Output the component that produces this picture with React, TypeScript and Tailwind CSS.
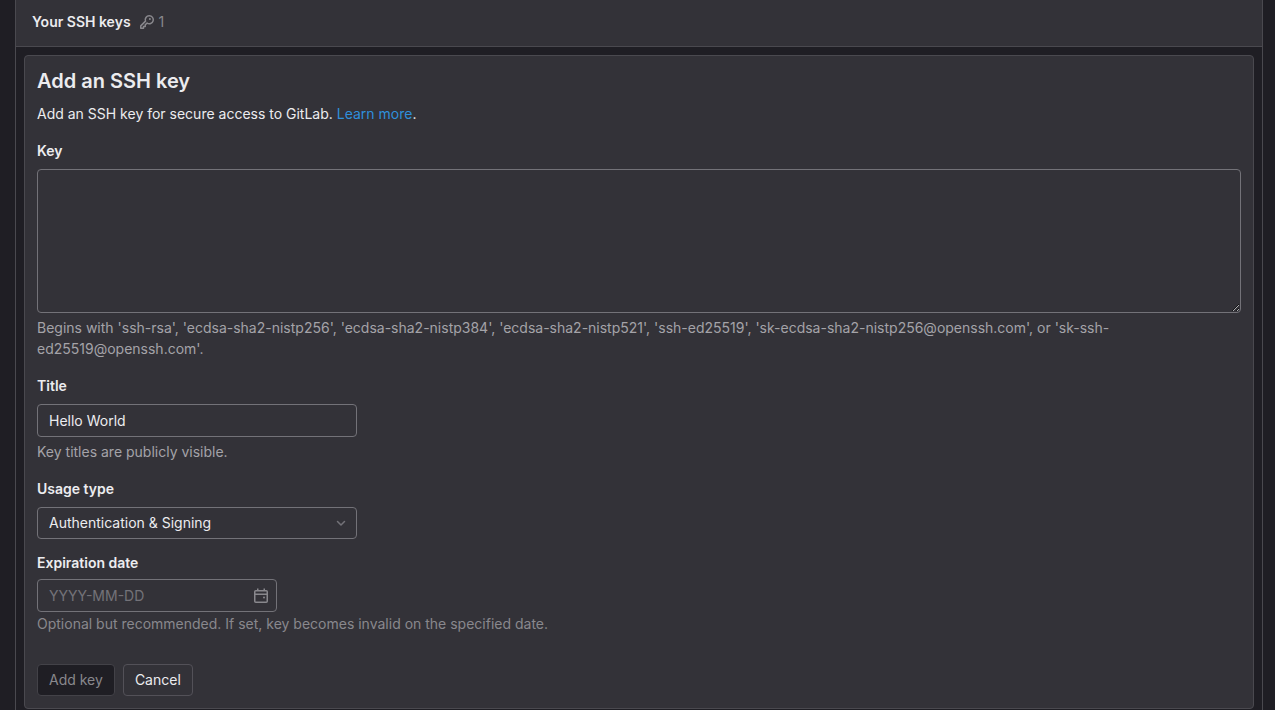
import React, { useState } from 'react';

const USAGE_TYPES = [
    { value: 'auth_and_signing', label: 'Authentication & Signing' },
    { value: 'auth', label: 'Authentication' },
    { value: 'signing', label: 'Signing' }
];

function KeyIcon() {
    return (
        <svg viewBox="0 0 16 16" className="w-4 h-4 shrink-0" fill="none" stroke="currentColor" strokeWidth="1.5" strokeLinejoin="round" aria-hidden="true">
            <path d="M10.3 1.75a4 4 0 0 0-3.8 5.4L1.75 11.9v2.35H4.5V12.5h1.75v-1.75L8.1 9.1a4 4 0 1 0 2.2-7.35Z" />
            <circle cx="10.9" cy="5.1" r="1" fill="currentColor" stroke="none" />
        </svg>
    );
}

function CalendarIcon() {
    return (
        <svg viewBox="0 0 16 16" className="w-4 h-4" fill="none" stroke="currentColor" strokeWidth="1.5" aria-hidden="true">
            <rect x="1.75" y="2.75" width="12.5" height="11.5" rx="1" />
            <path d="M1.75 6.25h12.5M4.75 0.5v2.5M11.25 0.5v2.5" />
            <circle cx="11" cy="9.5" r="1" fill="currentColor" stroke="none" />
        </svg>
    );
}

function ChevronIcon() {
    return (
        <svg viewBox="0 0 12 12" className="w-3 h-3" fill="none" stroke="currentColor" strokeWidth="1.5" strokeLinecap="round" strokeLinejoin="round" aria-hidden="true">
            <path d="M2.5 4.5 6 8l3.5-3.5" />
        </svg>
    );
}

interface FieldLabelProps {
    htmlFor: string;
    children: React.ReactNode;
}

function FieldLabel({ htmlFor, children }: FieldLabelProps) {
    return (
        <label htmlFor={htmlFor} className="block font-semibold leading-5">
            {children}
        </label>
    );
}

export default function App() {
    const [key, setKey] = useState('');
    const [title, setTitle] = useState('Hello World');
    const [usageType, setUsageType] = useState('auth_and_signing');
    const [expiresAt, setExpiresAt] = useState('');

    return (
        <div className="min-h-screen bg-[#1f1e24] pl-[15px] pr-3 font-['Inter',sans-serif] text-sm text-[#ececef]">
            <section className="min-h-screen border-x border-[#4a494f]">
                <header className="flex items-center gap-2 bg-[#333238] border-b border-[#4a494f] px-4 pt-3 pb-[14px]">
                    <h2 className="font-semibold leading-5">Your SSH keys</h2>
                    <span className="flex items-center gap-1 text-[#89888d] leading-5">
                        <KeyIcon />
                        1
                    </span>
                </header>

                <div className="p-2 pb-0">
                    <form
                        className="bg-[#333238] border border-[#4a494f] rounded p-3"
                        onSubmit={(e) => e.preventDefault()}
                    >
                        <h3 className="text-xl font-semibold leading-[26px]">Add an SSH key</h3>
                        <p className="mt-[10px] leading-5">
                            Add an SSH key for secure access to GitLab. <a href="#" className="text-[#2f8fdc]">Learn more</a>.
                        </p>

                        <div className="mt-[17px]">
                            <FieldLabel htmlFor="key">Key</FieldLabel>
                            <textarea
                                id="key"
                                className="block mt-2 w-full h-36 px-3 py-2 border border-[#737278] rounded bg-transparent scheme-dark resize-y"
                                value={key}
                                onChange={(e) => setKey(e.target.value)}
                            />
                            <p className="mt-1 leading-[21px] text-[#a4a3a8]">
                                Begins with 'ssh-rsa', 'ecdsa-sha2-nistp256', 'ecdsa-sha2-nistp384', 'ecdsa-sha2-nistp521', 'ssh-ed25519', 'sk-ecdsa-sha2-nistp256@openssh.com', or 'sk-ssh-ed25519@openssh.com'.
                            </p>
                        </div>

                        <div className="mt-[17px]">
                            <FieldLabel htmlFor="title">Title</FieldLabel>
                            <input
                                id="title"
                                type="text"
                                className="block mt-2 w-80 h-[33px] px-[11px] border border-[#737278] rounded bg-transparent"
                                value={title}
                                onChange={(e) => setTitle(e.target.value)}
                            />
                            <p className="mt-1 leading-[21px] text-[#a4a3a8]">Key titles are publicly visible.</p>
                        </div>

                        <div className="mt-[17px]">
                            <FieldLabel htmlFor="usage-type">Usage type</FieldLabel>
                            <div className="relative mt-2 w-80">
                                <select
                                    id="usage-type"
                                    className="block w-full h-8 pl-[11px] pr-8 border border-[#737278] rounded bg-[#333238] appearance-none"
                                    value={usageType}
                                    onChange={(e) => setUsageType(e.target.value)}
                                >
                                    {USAGE_TYPES.map((type) => (
                                        <option key={type.value} value={type.value}>{type.label}</option>
                                    ))}
                                </select>
                                <span className="absolute inset-y-0 right-[10px] flex items-center pointer-events-none text-[#737278]">
                                    <ChevronIcon />
                                </span>
                            </div>
                        </div>

                        <div className="mt-[14px]">
                            <FieldLabel htmlFor="expires-at">Expiration date</FieldLabel>
                            <div className="relative mt-[6px] w-60">
                                <input
                                    id="expires-at"
                                    type="text"
                                    className="block w-full h-[33px] pl-[11px] pr-8 border border-[#737278] rounded bg-transparent placeholder:text-[#737278]"
                                    placeholder="YYYY-MM-DD"
                                    value={expiresAt}
                                    onChange={(e) => setExpiresAt(e.target.value)}
                                />
                                <button type="button" aria-label="Open datepicker" className="absolute inset-y-0 right-2 flex items-center text-[#89888d]">
                                    <CalendarIcon />
                                </button>
                            </div>
                            <p className="mt-[2px] leading-5 text-[#89888d]">
                                Optional but recommended. If set, key becomes invalid on the specified date.
                            </p>
                        </div>

                        <div className="mt-[30px] flex gap-2">
                            <button type="submit" disabled={!key} className="h-8 px-[11px] border border-[#434248] rounded bg-[#1f1e24] disabled:text-[#89888d]">
                                Add key
                            </button>
                            <button type="button" className="h-8 px-[11px] border border-[#535158] rounded">
                                Cancel
                            </button>
                        </div>
                    </form>
                </div>
            </section>
        </div>
    );
}
